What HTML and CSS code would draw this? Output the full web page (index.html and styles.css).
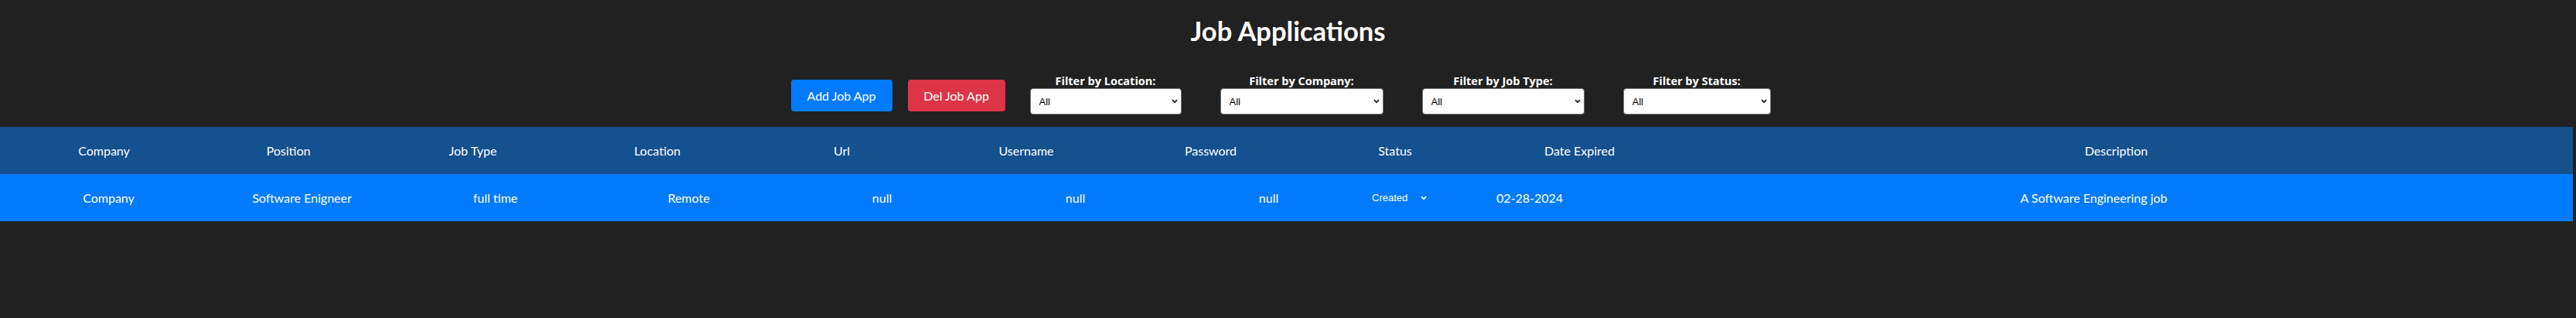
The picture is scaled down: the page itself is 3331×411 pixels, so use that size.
FILE: index.html
```html
<!DOCTYPE html>
<html lang="en">
<head>
<meta charset="utf-8">
<title>Job Applications</title>
<link rel="stylesheet" href="styles.css">
</head>
<body>
<main class="page">
  <h1 class="title">Job Applications</h1>
  <div class="toolbar">
    <div class="actions">
      <button class="btn btn-add">Add Job App</button>
      <button class="btn btn-del">Del Job App</button>
    </div>
    <div class="filters">
      <div class="filter">
        <label class="filter-label" for="f-loc">Filter by Location:</label>
        <div class="select-wrap sel-location">
          <select id="f-loc" class="filter-select"><option>All</option></select>
          <svg class="chevron" viewBox="0 0 10 7"><path d="M1.2 1.2 L5 5 L8.8 1.2" fill="none" stroke="#222" stroke-width="2.2"/></svg>
        </div>
      </div>
      <div class="filter">
        <label class="filter-label" for="f-comp">Filter by Company:</label>
        <div class="select-wrap sel-company">
          <select id="f-comp" class="filter-select"><option>All</option></select>
          <svg class="chevron" viewBox="0 0 10 7"><path d="M1.2 1.2 L5 5 L8.8 1.2" fill="none" stroke="#222" stroke-width="2.2"/></svg>
        </div>
      </div>
      <div class="filter">
        <label class="filter-label" for="f-type">Filter by Job Type:</label>
        <div class="select-wrap sel-type">
          <select id="f-type" class="filter-select"><option>All</option></select>
          <svg class="chevron" viewBox="0 0 10 7"><path d="M1.2 1.2 L5 5 L8.8 1.2" fill="none" stroke="#222" stroke-width="2.2"/></svg>
        </div>
      </div>
      <div class="filter">
        <label class="filter-label" for="f-status">Filter by Status:</label>
        <div class="select-wrap sel-status">
          <select id="f-status" class="filter-select"><option>All</option></select>
          <svg class="chevron" viewBox="0 0 10 7"><path d="M1.2 1.2 L5 5 L8.8 1.2" fill="none" stroke="#222" stroke-width="2.2"/></svg>
        </div>
      </div>
    </div>
  </div>

  <div class="table" role="table">
    <div class="row row-head" role="row">
      <div class="cell" role="columnheader">Company</div>
      <div class="cell" role="columnheader">Position</div>
      <div class="cell" role="columnheader">Job Type</div>
      <div class="cell" role="columnheader">Location</div>
      <div class="cell" role="columnheader">Url</div>
      <div class="cell" role="columnheader">Username</div>
      <div class="cell" role="columnheader">Password</div>
      <div class="cell" role="columnheader">Status</div>
      <div class="cell" role="columnheader">Date Expired</div>
      <div class="cell" role="columnheader">Description</div>
    </div>
    <div class="row row-body" role="row">
      <div class="cell" role="cell">Company</div>
      <div class="cell" role="cell">Software Enigneer</div>
      <div class="cell" role="cell">full time</div>
      <div class="cell" role="cell">Remote</div>
      <div class="cell" role="cell">null</div>
      <div class="cell" role="cell">null</div>
      <div class="cell" role="cell">null</div>
      <div class="cell" role="cell">
        <div class="status-wrap">
          <select class="status-select"><option>Created</option></select>
          <svg class="status-chevron" viewBox="0 0 10 7"><path d="M1.2 1.2 L5 5 L8.8 1.2" fill="none" stroke="#fff" stroke-width="2.2"/></svg>
        </div>
      </div>
      <div class="cell" role="cell">02-28-2024</div>
      <div class="cell" role="cell">A Software Engineering job</div>
    </div>
  </div>
</main>
</body>
</html>
```
FILE: styles.css
```css
* {
  box-sizing: border-box;
}

body {
  margin: 0;
  background: #212121;
  color: #ffffff;
  font-family: Lato, "Open Sans", sans-serif;
}

.title {
  margin: 21px 0 0;
  font-size: 34.5px;
  line-height: 38px;
  font-weight: 700;
  text-align: center;
}

.toolbar {
  display: flex;
  justify-content: center;
  align-items: flex-end;
  gap: 32px;
  margin-top: 37px;
  padding-right: 19px;
}

.actions {
  display: flex;
  gap: 20px;
  margin-bottom: 4px;
}

.btn {
  height: 41px;
  border: 0;
  border-radius: 4px;
  color: #ffffff;
  font-family: Lato, "Open Sans", sans-serif;
  font-size: 16px;
  padding: 0;
}

.btn-add {
  width: 131px;
  background: #007bff;
}

.btn-del {
  width: 126px;
  background: #dc3545;
}

.filters {
  display: flex;
  gap: 50px;
}

.filter {
  display: flex;
  flex-direction: column;
  align-items: center;
}

.filter-label {
  font-family: "Open Sans", Lato, sans-serif;
  font-size: 14.5px;
  font-weight: 700;
  line-height: 18px;
  white-space: nowrap;
}

.select-wrap {
  position: relative;
}

.sel-location { width: 196px; }
.sel-company { width: 211px; }
.sel-type { width: 210px; }
.sel-status { width: 191px; }

.filter-select {
  appearance: none;
  -webkit-appearance: none;
  display: block;
  width: 100%;
  height: 34px;
  border: 1px solid #6f7378;
  border-radius: 4px;
  background: #ffffff;
  color: #000000;
  font-family: "Liberation Sans", Arial, sans-serif;
  font-size: 13px;
  padding: 0 0 0 11px;
}

.chevron {
  position: absolute;
  right: 5px;
  top: 14px;
  width: 8px;
  height: 6px;
  pointer-events: none;
}

.table {
  margin-top: 16px;
  width: 3327px;
}

.row {
  display: grid;
  width: 100%;
  height: 61px;
  align-items: center;
  text-align: center;
  font-size: 16px;
}

.row-head {
  background: #15508f;
  grid-template-columns: repeat(9, 238.5px) 1149.5px;
  padding: 0 15.75px 0 15.25px;
}

.row-body {
  background: #007bff;
  grid-template-columns: repeat(7, 250px) 87px 251px 1208px;
  padding: 0 15.5px;
}

.cell {
  white-space: nowrap;
}

.status-wrap {
  position: relative;
  width: 82px;
  margin: 0 auto;
}

.status-select {
  appearance: none;
  -webkit-appearance: none;
  display: block;
  width: 100%;
  height: 24px;
  border: 0;
  background: transparent;
  color: #ffffff;
  font-family: "Liberation Sans", Arial, sans-serif;
  font-size: 13px;
  padding: 0 0 0 6px;
}

.status-chevron {
  position: absolute;
  right: 5px;
  top: 9px;
  width: 8px;
  height: 6px;
  pointer-events: none;
}
```
